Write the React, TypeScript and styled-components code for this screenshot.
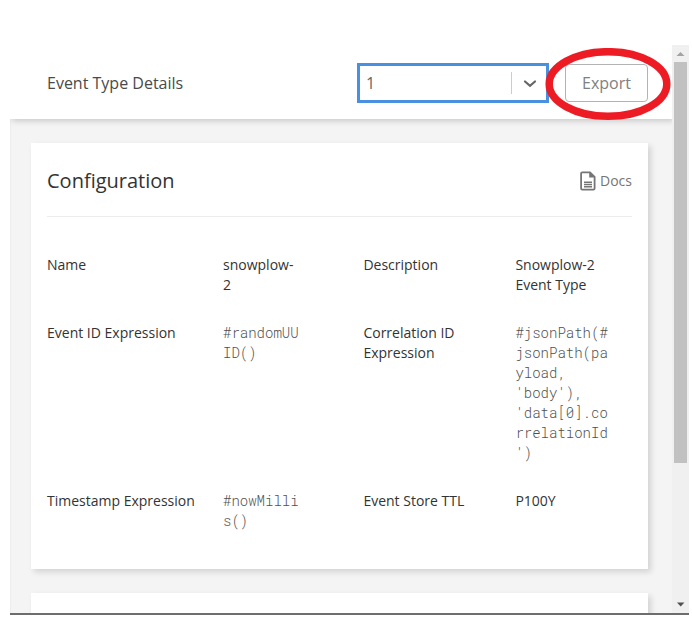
import React from "react";
import styled, { createGlobalStyle } from "styled-components";

const GlobalStyle = createGlobalStyle`
  *, *::before, *::after { box-sizing: border-box; }
  body { margin: 0; background: #fff; font-family: "Open Sans", sans-serif; overflow: hidden; }
`;

const Page = styled.div`
  height: 624px;
  padding: 45px 3px 9px 10px;
`;

const Window = styled.div`
  display: flex;
  height: 570px;
  border-bottom: 2px solid #6d6d6d;
`;

const Main = styled.main`
  flex: 1;
  min-width: 0;
  display: flex;
  flex-direction: column;
  overflow: hidden;
  background: #f4f4f4;
  box-shadow: inset 2px 0 2px -1px rgba(0, 0, 0, 0.035);
`;

const Header = styled.header`
  flex: none;
  display: flex;
  align-items: center;
  height: 74px;
  padding: 2px 24px 0 37px;
  background: #fff;
  box-shadow: 2px 2px 6px rgba(0, 0, 0, 0.18);
`;

const PageTitle = styled.h1`
  margin: 0;
  flex: 1;
  font-size: 16px;
  font-weight: 400;
  line-height: 24px;
  color: #4a4a4a;
`;

const Select = styled.div`
  display: flex;
  align-items: center;
  width: 192px;
  height: 40px;
  margin-right: 16px;
  border: 3px solid #4a90e2;
  background: #fff;
`;

const SelectValue = styled.span`
  flex: 1;
  padding-left: 6px;
  font-size: 16px;
  line-height: 24px;
  color: #666;
`;

const Separator = styled.span`
  width: 1px;
  height: 22px;
  background: #ccc;
`;

const Arrow = styled.svg`
  width: 14px;
  height: 10px;
  margin: 2px 9px 0 11px;
`;

const ButtonWrap = styled.div`
  position: relative;
`;

const Button = styled.button`
  display: block;
  width: 83px;
  height: 38px;
  padding: 0;
  border: 1px solid #b3b3b3;
  border-radius: 4px;
  background: #fff;
  font: 400 16px/24px "Open Sans", sans-serif;
  color: #808080;
`;

const Highlight = styled.svg`
  position: absolute;
  left: -20px;
  top: -16px;
  width: 126px;
  height: 73px;
  z-index: 2;
  pointer-events: none;
`;

const Content = styled.div`
  display: flex;
  flex-direction: column;
  gap: 24px;
  padding: 24px 24px 0 21px;
`;

const Card = styled.section<{ $height: number }>`
  flex: none;
  height: ${(p) => p.$height}px;
  padding: 0 16px;
  background: #fff;
  box-shadow: 3px 3px 6px rgba(0, 0, 0, 0.14);
`;

const CardHeader = styled.div`
  display: flex;
  align-items: center;
  justify-content: space-between;
  height: 74px;
  padding-top: 2px;
  border-bottom: 1px solid #ededed;
`;

const CardTitle = styled.h2`
  margin: 0;
  font-size: 20px;
  font-weight: 400;
  line-height: 28px;
  color: #333;
`;

const DocsLink = styled.a`
  display: flex;
  align-items: center;
  gap: 4px;
  font-size: 14px;
  line-height: 20px;
  color: #757575;
`;

const Details = styled.dl`
  display: grid;
  grid-template-columns: 176px 140.4px 152px 116px;
  row-gap: 28px;
  margin: 38px 0 0;
  font-size: 14px;
  line-height: 20px;
  color: #333;
`;

const Term = styled.dt`
  white-space: pre-line;
`;

const Value = styled.dd<{ $code?: boolean }>`
  margin: 0;
  white-space: pre-line;
  ${(p) =>
    p.$code &&
    `
    font-family: "Roboto Mono", "Liberation Mono", monospace;
    font-weight: 300;
    color: #505050;
  `}
`;

const Scrollbar = styled.div`
  flex: none;
  display: flex;
  flex-direction: column;
  align-items: center;
  width: 17px;
  background: #f0f0f0;
`;

const ScrollArrow = styled.svg`
  flex: none;
  width: 17px;
  height: 17px;
`;

const Track = styled.div`
  flex: 1;
`;

const Thumb = styled.div`
  width: 13px;
  height: 401px;
  background: #c1c1c1;
`;

const fields = [
  { label: "Name", value: "snowplow-\n2" },
  { label: "Description", value: "Snowplow-2\nEvent Type" },
  { label: "Event ID Expression", value: "#randomUU\nID()", code: true },
  {
    label: "Correlation ID\nExpression",
    value: "#jsonPath(#\njsonPath(pa\nyload,\n'body'),\n'data[0].co\nrrelationId\n')",
    code: true,
  },
  { label: "Timestamp Expression", value: "#nowMilli\ns()", code: true },
  { label: "Event Store TTL", value: "P100Y" },
];

export default function App() {
  return (
    <Page>
      <GlobalStyle />
      <Window>
        <Main>
          <Header>
            <PageTitle>Event Type Details</PageTitle>
            <Select>
              <SelectValue>1</SelectValue>
              <Separator />
              <Arrow viewBox="0 0 14 10">
                <path d="M2 2.5 L7 6.8 L12 2.5" fill="none" stroke="#666" strokeWidth="2.2" strokeLinecap="round" />
              </Arrow>
            </Select>
            <ButtonWrap>
              <Button>Export</Button>
              <Highlight viewBox="0 0 126 73">
                <ellipse cx="63" cy="36" rx="58.8" ry="32.3" fill="none" stroke="#ed1c24" strokeWidth="7.5" />
              </Highlight>
            </ButtonWrap>
          </Header>
          <Content>
            <Card $height={426}>
              <CardHeader>
                <CardTitle>Configuration</CardTitle>
                <DocsLink>
                  <svg width="16" height="20" viewBox="0 0 16 20">
                    <path d="M2.2 1.3h7.8L14.6 5.9V17.6a1.1 1.1 0 0 1-1.1 1.1H2.2a1.1 1.1 0 0 1-1.1-1.1V2.4a1.1 1.1 0 0 1 1.1-1.1z" fill="#fff" stroke="#757575" strokeWidth="1.8" />
                    <path d="M9.2 1l5.6 5.5H9.2z" fill="#757575" />
                    <path d="M4 11.2h8M4 13.5h8M4 15.8h8" stroke="#757575" strokeWidth="1.4" />
                  </svg>
                  Docs
                </DocsLink>
              </CardHeader>
              <Details>
                {fields.map((f) => (
                  <React.Fragment key={f.label}>
                    <Term>{f.label}</Term>
                    <Value $code={f.code}>{f.value}</Value>
                  </React.Fragment>
                ))}
              </Details>
            </Card>
            <Card $height={120} />
          </Content>
        </Main>
        <Scrollbar>
          <ScrollArrow viewBox="0 0 17 17">
            <path d="M4.5 11L8.5 7l4 4z" fill="#a3a3a3" />
          </ScrollArrow>
          <Thumb />
          <Track />
          <ScrollArrow viewBox="0 0 17 17">
            <path d="M5 6.5h7.4L8.7 10.5z" fill="#505050" />
          </ScrollArrow>
        </Scrollbar>
      </Window>
    </Page>
  );
}
